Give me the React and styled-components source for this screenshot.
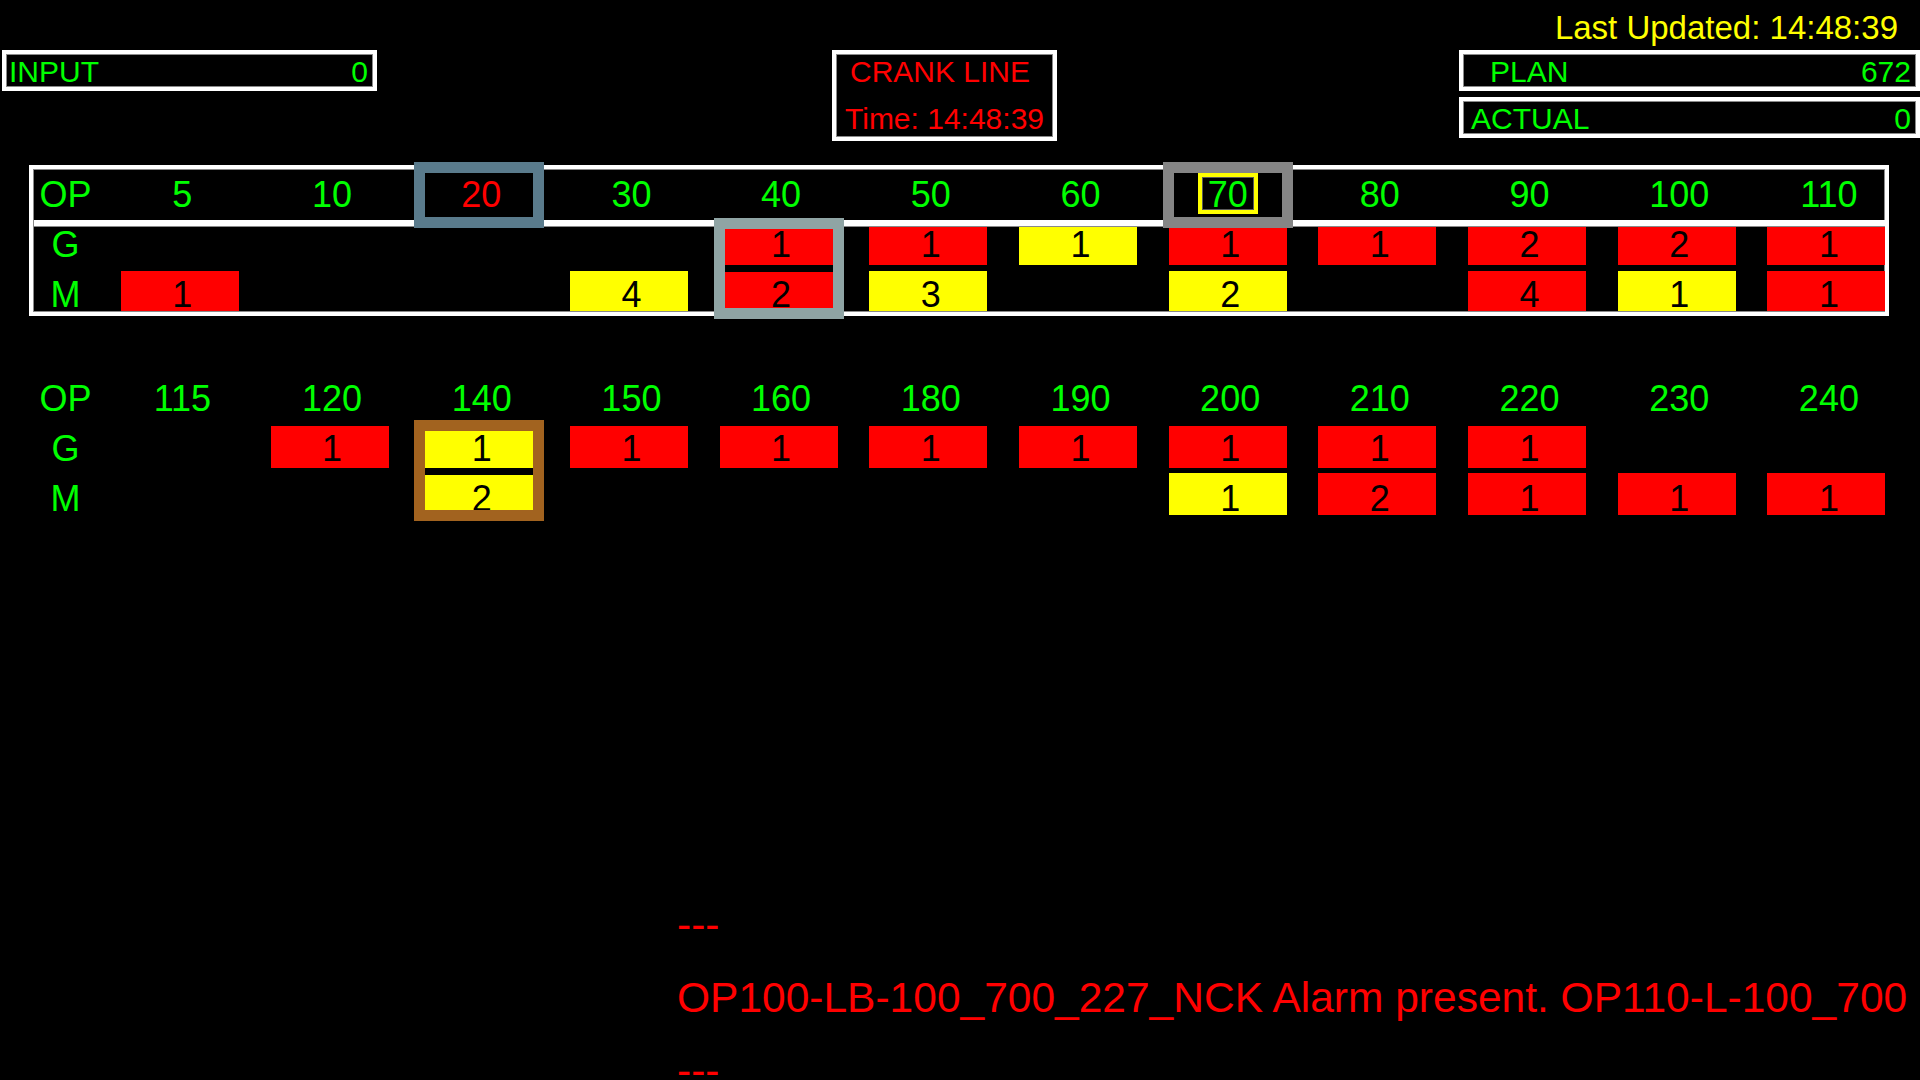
import React from 'react';
import styled, { createGlobalStyle } from 'styled-components';

const GREEN = '#00ff00';
const RED = '#ff0000';
const YELLOW = '#ffff00';
const EDGE = '#8a8a8a';

const GlobalStyle = createGlobalStyle`
  html, body { margin: 0; padding: 0; background: #000; overflow: hidden; }
  body { font-family: "Liberation Sans", Arial, Helvetica, sans-serif; }
`;

const Screen = styled.div`
  width: 1920px;
  height: 1080px;
  overflow: hidden;
  background: #000;
  font-family: "Liberation Sans", Arial, Helvetica, sans-serif;
`;

const TopBar = styled.header`
  display: flex;
  align-items: flex-start;
  height: 165px;
`;

const Counter = styled.div`
  box-sizing: border-box;
  display: flex;
  justify-content: space-between;
  width: ${p => p.$width}px;
  height: 41px;
  margin-top: ${p => p.$top}px;
  margin-left: ${p => p.$left}px;
  padding: 1px 5px 1px ${p => p.$indent}px;
  border: 4px solid #fff;
  box-shadow: inset 0 0 0 1px ${EDGE};
  background: #000;
  color: ${GREEN};
  font-size: 30px;
  line-height: 34px;
  white-space: pre;
`;

const CrankBox = styled.div`
  box-sizing: border-box;
  display: flex;
  flex-direction: column;
  justify-content: space-between;
  align-items: center;
  width: 225px;
  height: 91px;
  margin-top: 50px;
  margin-left: 455px;
  padding: 1px 4px;
  border: 4px solid #fff;
  box-shadow: inset 0 0 0 1px ${EDGE};
  color: ${RED};
  font-size: 30px;
  line-height: 34px;
  white-space: nowrap;
`;

const CrankTitle = styled.div`
  padding-right: 9px;
`;

const RightStack = styled.div`
  display: flex;
  flex-direction: column;
  width: 461px;
  margin-left: 402px;
  padding-top: 9px;
`;

const Stamp = styled.div`
  color: ${YELLOW};
  font-size: 33px;
  line-height: 38px;
  text-align: right;
  padding-right: 22px;
  white-space: nowrap;
`;

const Board = styled.section`
  box-sizing: border-box;
  width: ${p => (p.$bordered ? 1860 : 1886)}px;
  margin-left: ${p => (p.$bordered ? 29 : 34)}px;
  margin-top: ${p => p.$top}px;
  overflow-x: clip;
  ${p =>
    p.$bordered
      ? `border: 4px solid #fff; padding: 1px; box-shadow: inset 0 0 0 1px ${EDGE};`
      : ''}
`;

const Grid = styled.div`
  position: relative;
  display: grid;
  grid-template-columns: 71px repeat(12, 149.7px);
  grid-template-rows: ${p => p.$rows};
`;

const RowLabel = styled.div`
  color: ${GREEN};
  font-size: 36px;
  line-height: ${p => p.$lh}px;
  text-align: center;
  padding-right: 8px;
`;

const HeadCell = styled.div`
  position: relative;
  padding-left: 5px;
  color: ${GREEN};
  font-size: 36px;
  line-height: 50px;
  text-align: center;
`;

const HeadFrame = styled.div`
  position: absolute;
  z-index: 2;
  top: -8px;
  bottom: -8px;
  left: calc(50% - 65px);
  width: 130px;
  box-sizing: border-box;
  display: flex;
  justify-content: center;
  align-items: flex-start;
  padding-left: ${p => (p.$tagged ? 0 : 4)}px;
  border: 11px solid ${p => p.$frame};
  background: #000;
  color: ${p => p.$ink};
  line-height: 44px;
`;

const Tag = styled.span`
  box-sizing: border-box;
  display: inline-block;
  height: 41px;
  padding: 0 6px;
  border: 4px solid ${YELLOW};
  box-shadow: inset 0 0 0 1px #5a5a5a;
  line-height: 36px;
`;

const Rule = styled.div`
  grid-column: 1 / -1;
  background: ${p => (p.$visible ? '#fff' : 'transparent')};
  box-shadow: ${p => (p.$visible ? `inset 0 -1px 0 ${EDGE}` : 'none')};
`;

const Slot = styled.div`
  display: flex;
  justify-content: center;
  align-items: flex-start;
`;

const Cell = styled.div`
  flex: none;
  box-sizing: border-box;
  width: ${p => p.$w}px;
  height: ${p => p.$h}px;
  margin-top: ${p => p.$mt}px;
  padding-left: 5px;
  background: ${p => (p.$tone === 'y' ? YELLOW : RED)};
  color: #000;
  font-size: 36px;
  line-height: ${p => p.$lh}px;
  text-align: center;
`;

const BodyFrame = styled.div`
  position: absolute;
  z-index: 2;
  grid-column: ${p => p.$col} / span 1;
  grid-row: 3 / 6;
  top: ${p => p.$top}px;
  bottom: ${p => p.$bottom}px;
  left: calc(50% - 65px);
  width: 130px;
  box-sizing: border-box;
  border: 11px solid ${p => p.$frame};
  pointer-events: none;
`;

const Ticker = styled.div`
  margin-top: 373px;
  margin-left: 677px;
  color: ${RED};
  font-size: 42.5px;
  line-height: 73px;
  white-space: nowrap;
  overflow: hidden;
`;

const GEOMETRY = {
  top: {
    rows: '50px 7px 38px 6px 40px',
    g: { h: 38, lh: 36, mt: 0 },
    m: { h: 40, lh: 48, mt: 0 },
    bg: { h: 36, lh: 32, mt: 2 },
    bm: { h: 36, lh: 46, mt: 1 },
    frame: { top: -9, bottom: -8 },
  },
  bottom: {
    rows: '50px 2px 42px 5px 42px',
    g: { h: 42, lh: 46, mt: 0 },
    m: { h: 42, lh: 52, mt: 0 },
    bg: { h: 37, lh: 36, mt: 5 },
    bm: { h: 35, lh: 48, mt: 2 },
    frame: { top: -6, bottom: -6 },
  },
};

const TOP_TABLE = {
  ops: [5, 10, 20, 30, 40, 50, 60, 70, 80, 90, 100, 110],
  head: {
    20: { frame: '#5a7b8c', ink: RED },
    70: { frame: '#858585', ink: GREEN, tag: true },
  },
  boxed: { 40: '#8fa4a4' },
  g: { 40: ['r', 1], 50: ['r', 1], 60: ['y', 1], 70: ['r', 1], 80: ['r', 1], 90: ['r', 2], 100: ['r', 2], 110: ['r', 1] },
  m: { 5: ['r', 1], 30: ['y', 4], 40: ['r', 2], 50: ['y', 3], 70: ['y', 2], 90: ['r', 4], 100: ['y', 1], 110: ['r', 1] },
};

const BOTTOM_TABLE = {
  ops: [115, 120, 140, 150, 160, 180, 190, 200, 210, 220, 230, 240],
  head: {},
  boxed: { 140: '#a2631f' },
  g: { 120: ['r', 1], 140: ['y', 1], 150: ['r', 1], 160: ['r', 1], 180: ['r', 1], 190: ['r', 1], 200: ['r', 1], 210: ['r', 1], 220: ['r', 1] },
  m: { 140: ['y', 2], 200: ['y', 1], 210: ['r', 2], 220: ['r', 1], 230: ['r', 1], 240: ['r', 1] },
};

function DataRow({ table, row, geo }) {
  const normal = geo[row];
  const boxedGeo = row === 'g' ? geo.bg : geo.bm;
  return (
    <>
      <RowLabel $lh={normal.lh}>{row.toUpperCase()}</RowLabel>
      {table.ops.map(op => {
        const entry = table[row][op];
        const boxed = Boolean(table.boxed[op]);
        const gm = boxed ? boxedGeo : normal;
        return (
          <Slot key={op}>
            {entry && (
              <Cell $tone={entry[0]} $w={boxed ? 108 : 118} $h={gm.h} $lh={gm.lh} $mt={gm.mt}>
                {entry[1]}
              </Cell>
            )}
          </Slot>
        );
      })}
    </>
  );
}

function OpTable({ table, geo, bordered, top }) {
  return (
    <Board $bordered={bordered} $top={top}>
      <Grid $rows={geo.rows}>
        <RowLabel $lh={50}>OP</RowLabel>
        {table.ops.map(op => {
          const mark = table.head[op];
          return (
            <HeadCell key={op}>
              {mark ? (
                <HeadFrame $frame={mark.frame} $ink={mark.ink} $tagged={mark.tag}>
                  {mark.tag ? <Tag>{op}</Tag> : op}
                </HeadFrame>
              ) : (
                op
              )}
            </HeadCell>
          );
        })}
        <Rule $visible={bordered} />
        <DataRow table={table} row="g" geo={geo} />
        <Rule />
        <DataRow table={table} row="m" geo={geo} />
        {table.ops.map((op, i) =>
          table.boxed[op] ? (
            <BodyFrame
              key={`f${op}`}
              $col={i + 2}
              $frame={table.boxed[op]}
              $top={geo.frame.top}
              $bottom={geo.frame.bottom}
            />
          ) : null
        )}
      </Grid>
    </Board>
  );
}

export default function App() {
  return (
    <Screen>
      <GlobalStyle />
      <TopBar>
        <Counter $width={375} $top={50} $left={2} $indent={3}>
          <span>INPUT</span>
          <span>0</span>
        </Counter>
        <CrankBox>
          <CrankTitle>CRANK LINE</CrankTitle>
          <div>Time: 14:48:39</div>
        </CrankBox>
        <RightStack>
          <Stamp>Last Updated: 14:48:39</Stamp>
          <Counter $width={461} $top={3} $left={0} $indent={27}>
            <span>PLAN</span>
            <span>672</span>
          </Counter>
          <Counter $width={461} $top={6} $left={0} $indent={8}>
            <span>ACTUAL</span>
            <span>0</span>
          </Counter>
        </RightStack>
      </TopBar>
      <OpTable table={TOP_TABLE} geo={GEOMETRY.top} bordered top={0} />
      <OpTable table={BOTTOM_TABLE} geo={GEOMETRY.bottom} top={58} />
      <Ticker>
        <div>---</div>
        <div>OP100-LB-100_700_227_NCK Alarm present. OP110-L-100_700</div>
        <div>---</div>
      </Ticker>
    </Screen>
  );
}
